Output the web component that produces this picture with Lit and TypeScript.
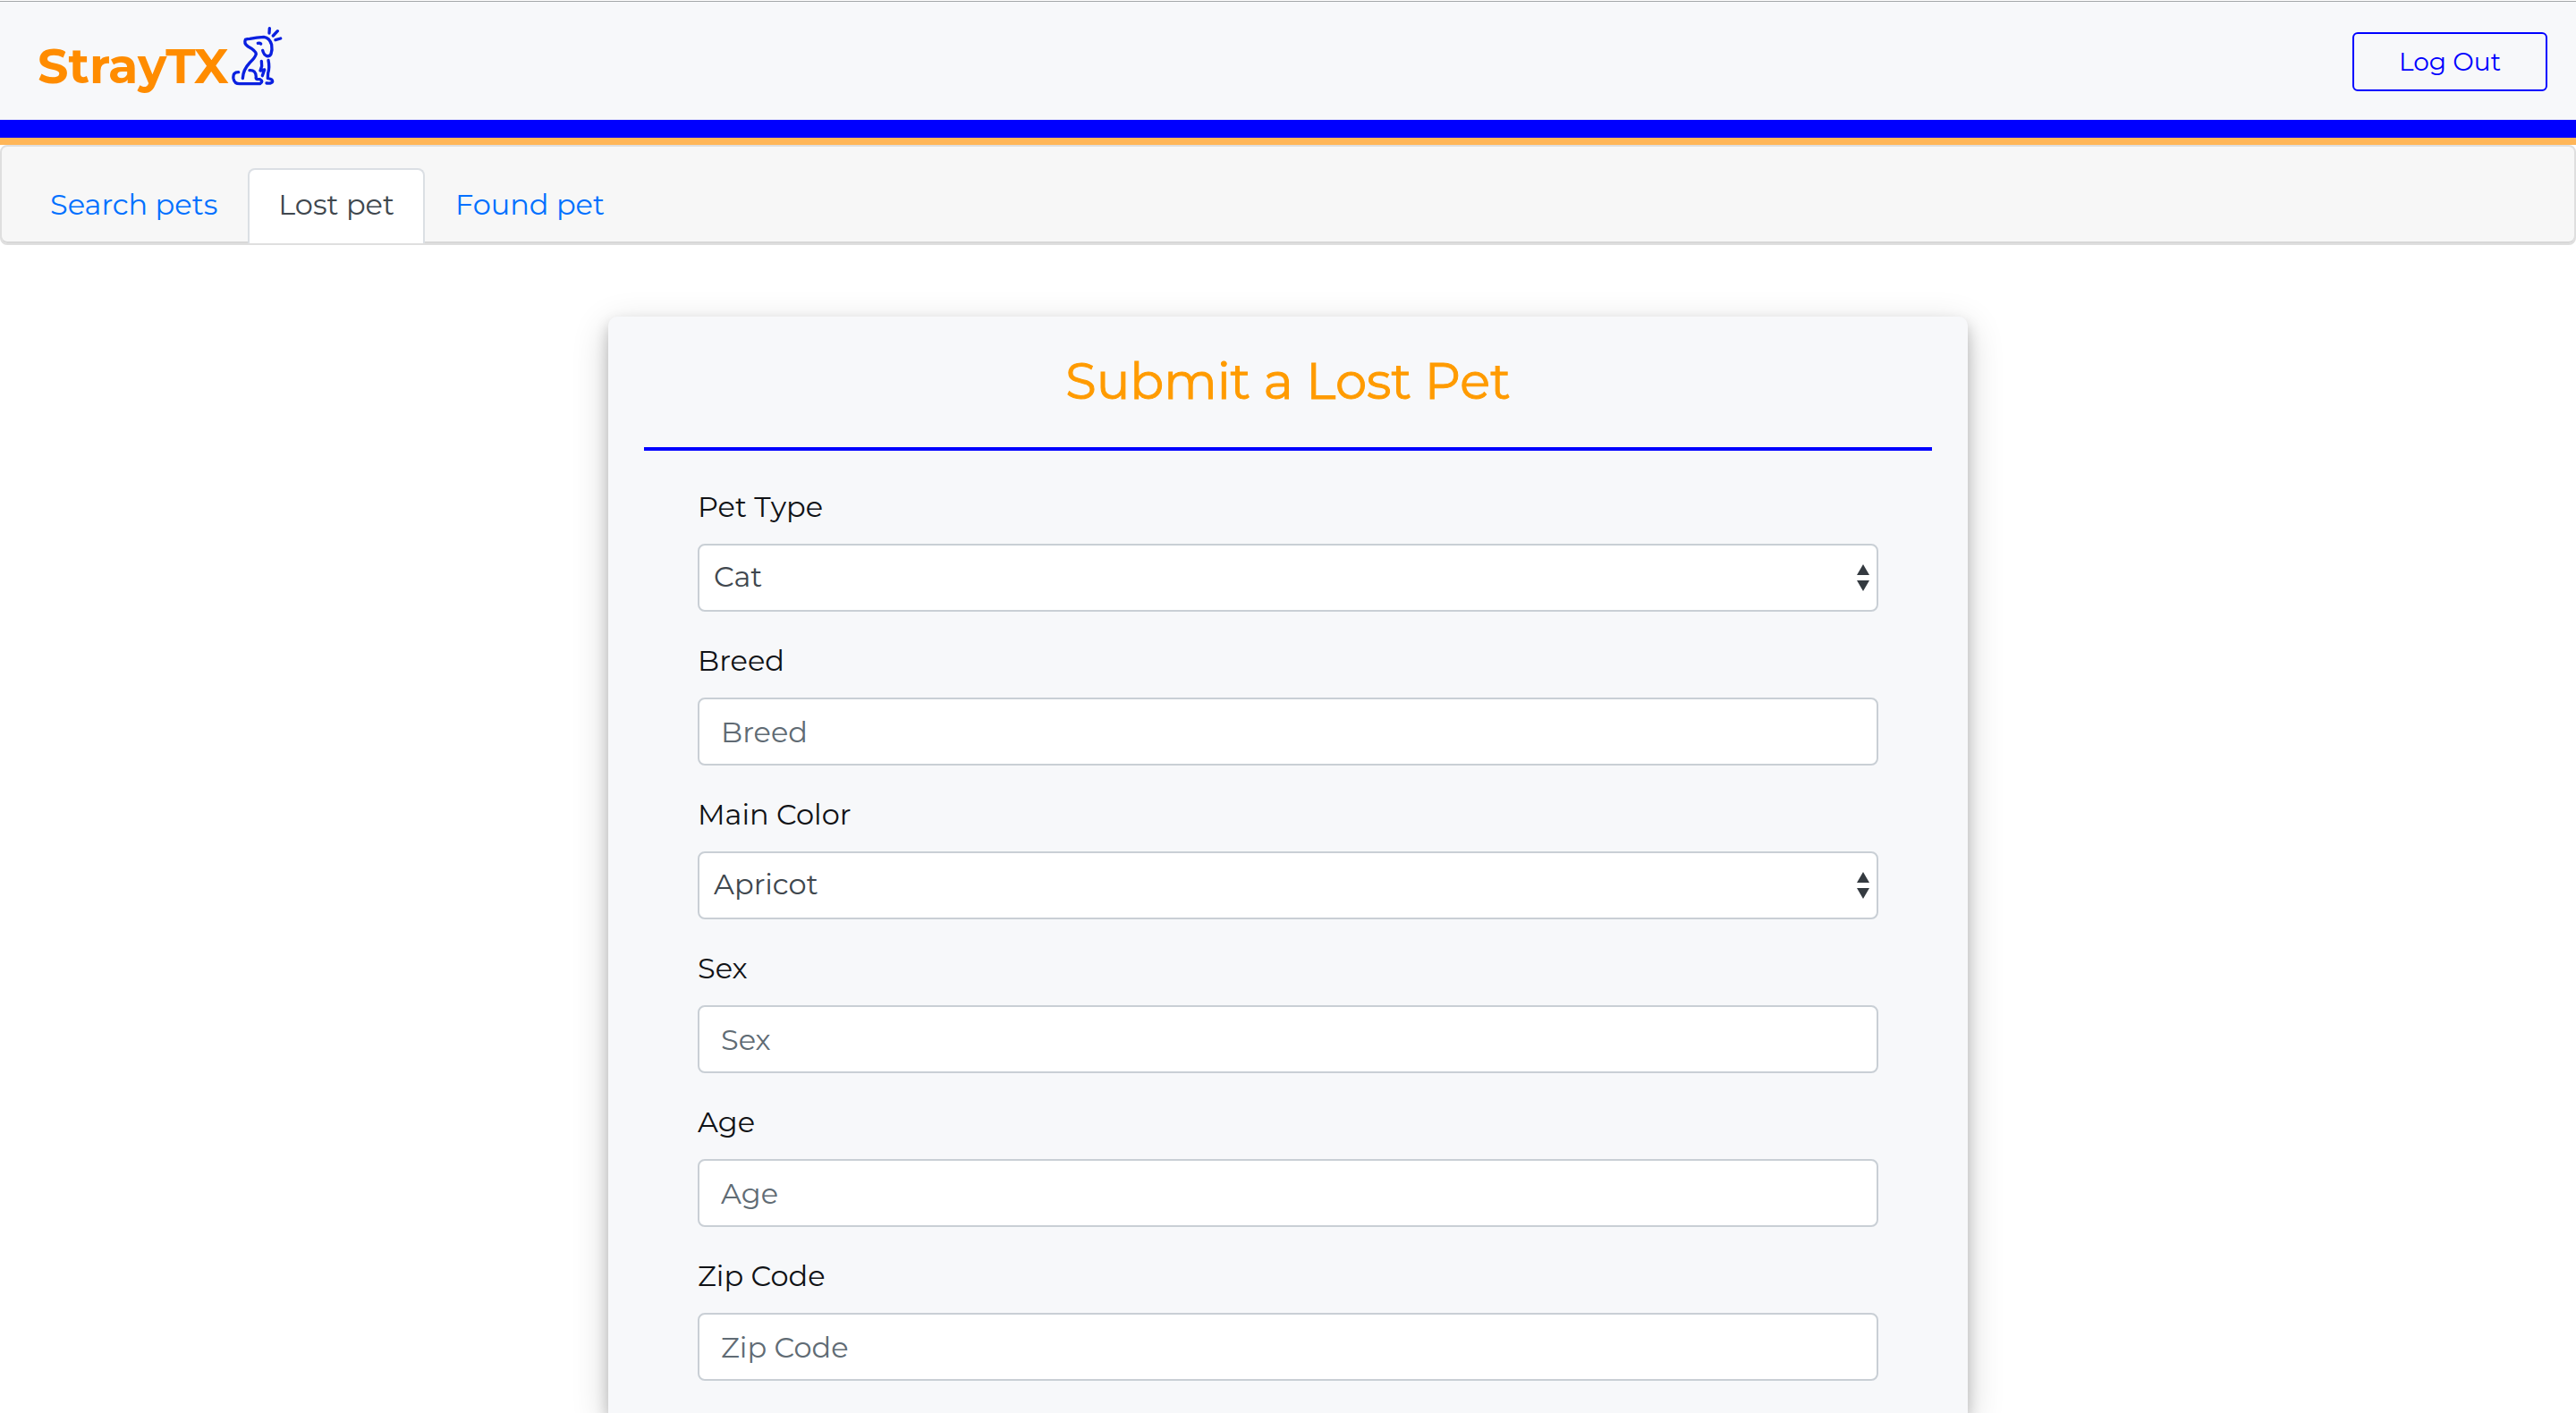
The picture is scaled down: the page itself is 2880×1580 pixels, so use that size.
import { LitElement, html, css, svg } from "lit";
import { customElement } from "lit/decorators.js";

interface Field {
  id: string;
  label: string;
  options?: string[];
}

const FIELDS: Field[] = [
  { id: "pet-type", label: "Pet Type", options: ["Cat"] },
  { id: "breed", label: "Breed" },
  { id: "main-color", label: "Main Color", options: ["Apricot"] },
  { id: "sex", label: "Sex" },
  { id: "age", label: "Age" },
  { id: "zip-code", label: "Zip Code" },
];

const TABS = ["Search pets", "Lost pet", "Found pet"];
const ACTIVE_TAB = "Lost pet";

const dog = svg`
  <path d="M94 203 Q95 174 118 150 Q136 133 139 121 Q138 110 112 96 Q97 86 103 73 Q109 70 118 70 Q140 65 165 64 Q184 66 191 90 Q194 108 189 121 Q184 130 175 128 Q165 124 161 109" />
  <path d="M145 85 Q151 83 155 87" />
  <path d="M80 182 Q60 182 63 203 Q66 221 84 221 H152 Q165 212 152 206 H143 Q137 205 139 198 Q138 174 117 176" />
  <path d="M157 145 L158 162 L153 177 L167 174 L160 194" />
  <path d="M180 142 Q185 165 179 185 L178 203 Q195 205 194 214 Q191 221 174 219" />
  <path d="M184 35 L183 51 M211 44 L196 60 M221 69 L204 74" />`;

@customElement("app-root")
export class AppRoot extends LitElement {
  static styles = css`
    :host {
      display: flex;
      flex-direction: column;
      min-height: 100vh;
      background: #fff;
      color: #101216;
      font: 400 32px/48px Montserrat, Inter, sans-serif;
    }
    * {
      box-sizing: border-box;
    }
    .topbar {
      display: flex;
      align-items: center;
      justify-content: space-between;
      height: 133px;
      margin-top: 1px;
      padding: 2px 32px 0 42px;
      border-top: 1px solid #a3a6a8;
      background: #f7f8fa;
    }
    .brand {
      display: flex;
      align-items: center;
      gap: 3px;
      padding-bottom: 12px;
      color: #ff8c00;
      font-size: 54px;
      font-weight: 700;
      line-height: 72px;
      text-decoration: none;
    }
    .wordmark {
      padding-top: 22px;
    }
    .dog {
      width: 57px;
      height: 66px;
      fill: none;
      stroke: #0a20e0;
      stroke-width: 10;
      stroke-linecap: round;
      stroke-linejoin: round;
    }
    .logout {
      width: 218px;
      height: 66px;
      padding: 0;
      border: 2px solid #00f;
      border-radius: 6px;
      background: transparent;
      color: #00f;
      font: inherit;
      font-size: 28px;
    }
    .stripes {
      height: 28px;
      border-top: 20px solid #00f;
      background: #ffb658;
    }
    .tabbar {
      height: 112px;
      padding: 24px 20px 0;
      border: 2px solid #dfdfdf;
      border-radius: 8px;
      background: #f7f7f7;
      box-shadow: inset 0 -2px #d7d7d7;
    }
    .tabs {
      display: flex;
    }
    .tab {
      height: 84px;
      padding: 15px 32px;
      border: 2px solid transparent;
      border-bottom: 0;
      border-radius: 8px 8px 0 0;
      color: #0070ff;
      text-decoration: none;
    }
    .tab.active {
      border-color: #dbdfe4;
      background: #fff;
      color: #40474e;
    }
    .page {
      display: flex;
      flex: 1;
      justify-content: center;
      padding-top: 80px;
      overflow: hidden;
    }
    .card {
      width: calc(50% + 80px);
      padding: 36px 40px;
      border-radius: 10px 10px 0 0;
      background: #f7f8fa;
      box-shadow: 0 8px 16px rgba(0, 0, 0, 0.2), 0 12px 40px rgba(0, 0, 0, 0.19);
    }
    .title {
      margin: 0;
      padding-bottom: 38px;
      border-bottom: 4px solid #00f;
      color: #ff9b00;
      font-size: 56px;
      font-weight: 400;
      -webkit-text-stroke: 1px #ff9b00;
      line-height: 72px;
      text-align: center;
    }
    .fields {
      display: grid;
      gap: 32px;
      padding: 40px 60px 0;
    }
    .field {
      display: grid;
      gap: 18px;
      line-height: 46px;
    }
    .control {
      position: relative;
      display: grid;
    }
    .input {
      width: 100%;
      height: 76px;
      margin: 0;
      padding: 0 24px;
      border: 2px solid #c9cfd5;
      border-radius: 8px;
      background: #fff;
      color: #40474e;
      font: inherit;
      outline: none;
      appearance: none;
    }
    .input.select {
      padding: 0 16px 2px;
    }
    .input::placeholder {
      color: #606b74;
      opacity: 1;
    }
    .arrows {
      position: absolute;
      top: 22px;
      right: 10px;
      width: 14px;
      height: 32px;
      fill: #343a40;
      pointer-events: none;
    }
  `;

  private renderField(f: Field) {
    return html`<div class="field">
      <label for=${f.id}>${f.label}</label>
      ${f.options
        ? html`<div class="control">
            <select class="input select" id=${f.id}>
              ${f.options.map((o) => html`<option>${o}</option>`)}
            </select>
            <svg class="arrows" viewBox="0 0 14 32" aria-hidden="true">
              <path d="M7 1 L14 13 H0 Z M0 19 H14 L7 31 Z" />
            </svg>
          </div>`
        : html`<input class="input" type="text" id=${f.id} placeholder=${f.label} />`}
    </div>`;
  }

  render() {
    return html`
      <header>
        <div class="topbar">
          <a class="brand" href="#">
            <span class="wordmark">StrayTX</span>
            <svg class="dog" viewBox="57 30 171 198" aria-hidden="true">${dog}</svg>
          </a>
          <button class="logout" type="button">Log Out</button>
        </div>
        <div class="stripes"></div>
      </header>
      <div class="tabbar">
        <nav class="tabs">
          ${TABS.map((t) => html`<a class=${t === ACTIVE_TAB ? "tab active" : "tab"} href="#">${t}</a>`)}
        </nav>
      </div>
      <main class="page">
        <form class="card">
          <h1 class="title">Submit a Lost Pet</h1>
          <div class="fields">${FIELDS.map((f) => this.renderField(f))}</div>
        </form>
      </main>
    `;
  }
}
